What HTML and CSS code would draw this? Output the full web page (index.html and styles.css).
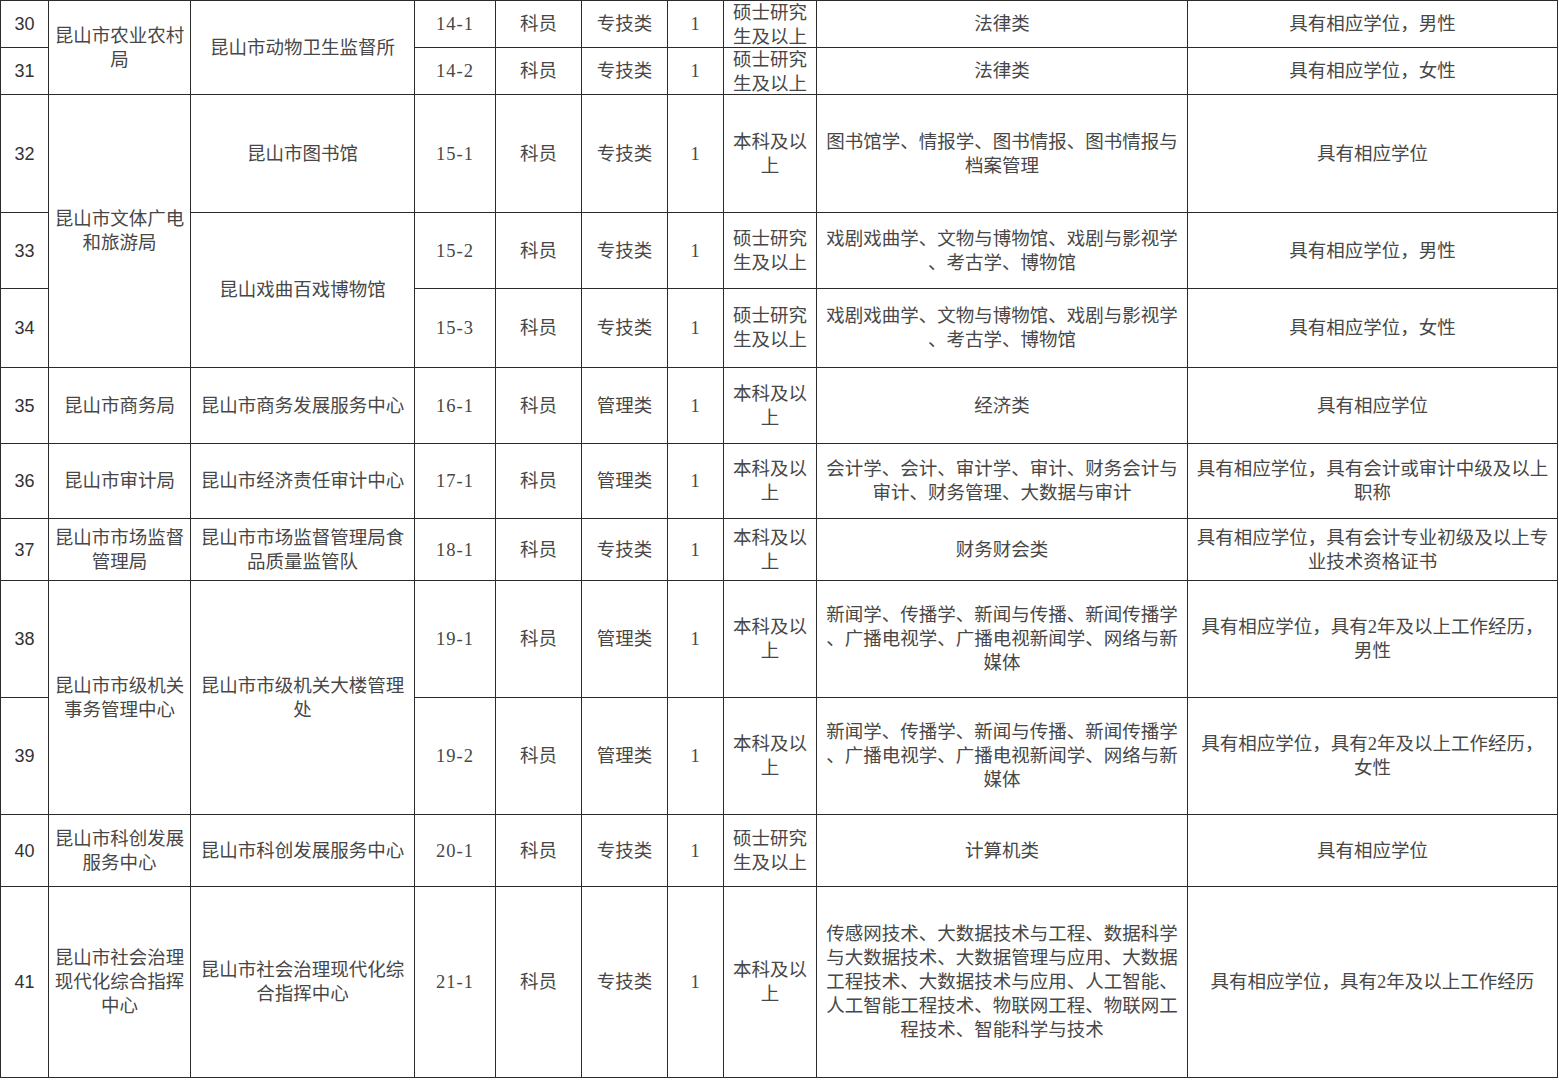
FILE: index.html
```html
<!DOCTYPE html>
<html lang="zh-CN">
<head>
<meta charset="utf-8">
<title>岗位表</title>
<link rel="stylesheet" href="styles.css">
</head>
<body>
<table class="jobs">
  <colgroup>
    <col class="c-no"><col class="c-dept"><col class="c-unit"><col class="c-code"><col class="c-post"><col class="c-type"><col class="c-num"><col class="c-edu"><col class="c-major"><col class="c-other">
  </colgroup>
  <tbody>
    <tr class="h47">
      <td class="no">30</td>
      <td rowspan="2">昆山市农业农村<br>局</td>
      <td rowspan="2">昆山市动物卫生监督所</td>
      <td class="code">14-1</td><td>科员</td><td>专技类</td><td class="code">1</td>
      <td><div class="tight">硕士研究<br>生及以上</div></td>
      <td>法律类</td>
      <td>具有相应学位，男性</td>
    </tr>
    <tr class="h47">
      <td class="no">31</td>
      <td class="code">14-2</td><td>科员</td><td>专技类</td><td class="code">1</td>
      <td><div class="tight">硕士研究<br>生及以上</div></td>
      <td>法律类</td>
      <td>具有相应学位，女性</td>
    </tr>
    <tr class="h118">
      <td class="no">32</td>
      <td rowspan="3">昆山市文体广电<br>和旅游局</td>
      <td>昆山市图书馆</td>
      <td class="code">15-1</td><td>科员</td><td>专技类</td><td class="code">1</td>
      <td>本科及以<br>上</td>
      <td>图书馆学、情报学、图书情报、图书情报与<br>档案管理</td>
      <td>具有相应学位</td>
    </tr>
    <tr class="h76">
      <td class="no">33</td>
      <td rowspan="2">昆山戏曲百戏博物馆</td>
      <td class="code">15-2</td><td>科员</td><td>专技类</td><td class="code">1</td>
      <td>硕士研究<br>生及以上</td>
      <td>戏剧戏曲学、文物与博物馆、戏剧与影视学<br>、考古学、博物馆</td>
      <td>具有相应学位，男性</td>
    </tr>
    <tr class="h79">
      <td class="no">34</td>
      <td class="code">15-3</td><td>科员</td><td>专技类</td><td class="code">1</td>
      <td>硕士研究<br>生及以上</td>
      <td>戏剧戏曲学、文物与博物馆、戏剧与影视学<br>、考古学、博物馆</td>
      <td>具有相应学位，女性</td>
    </tr>
    <tr class="h76">
      <td class="no">35</td>
      <td>昆山市商务局</td>
      <td>昆山市商务发展服务中心</td>
      <td class="code">16-1</td><td>科员</td><td>管理类</td><td class="code">1</td>
      <td>本科及以<br>上</td>
      <td>经济类</td>
      <td>具有相应学位</td>
    </tr>
    <tr class="h75">
      <td class="no">36</td>
      <td>昆山市审计局</td>
      <td>昆山市经济责任审计中心</td>
      <td class="code">17-1</td><td>科员</td><td>管理类</td><td class="code">1</td>
      <td>本科及以<br>上</td>
      <td>会计学、会计、审计学、审计、财务会计与<br>审计、财务管理、大数据与审计</td>
      <td>具有相应学位，具有会计或审计中级及以上<br>职称</td>
    </tr>
    <tr class="h62">
      <td class="no">37</td>
      <td>昆山市市场监督<br>管理局</td>
      <td>昆山市市场监督管理局食<br>品质量监管队</td>
      <td class="code">18-1</td><td>科员</td><td>专技类</td><td class="code">1</td>
      <td>本科及以<br>上</td>
      <td>财务财会类</td>
      <td>具有相应学位，具有会计专业初级及以上专<br>业技术资格证书</td>
    </tr>
    <tr class="h117">
      <td class="no">38</td>
      <td rowspan="2">昆山市市级机关<br>事务管理中心</td>
      <td rowspan="2">昆山市市级机关大楼管理<br>处</td>
      <td class="code">19-1</td><td>科员</td><td>管理类</td><td class="code">1</td>
      <td>本科及以<br>上</td>
      <td>新闻学、传播学、新闻与传播、新闻传播学<br>、广播电视学、广播电视新闻学、网络与新<br>媒体</td>
      <td>具有相应学位，具有2年及以上工作经历，<br>男性</td>
    </tr>
    <tr class="h117">
      <td class="no">39</td>
      <td class="code">19-2</td><td>科员</td><td>管理类</td><td class="code">1</td>
      <td>本科及以<br>上</td>
      <td>新闻学、传播学、新闻与传播、新闻传播学<br>、广播电视学、广播电视新闻学、网络与新<br>媒体</td>
      <td>具有相应学位，具有2年及以上工作经历，<br>女性</td>
    </tr>
    <tr class="h72">
      <td class="no">40</td>
      <td>昆山市科创发展<br>服务中心</td>
      <td>昆山市科创发展服务中心</td>
      <td class="code">20-1</td><td>科员</td><td>专技类</td><td class="code">1</td>
      <td>硕士研究<br>生及以上</td>
      <td>计算机类</td>
      <td>具有相应学位</td>
    </tr>
    <tr class="h191">
      <td class="no">41</td>
      <td>昆山市社会治理<br>现代化综合指挥<br>中心</td>
      <td>昆山市社会治理现代化综<br>合指挥中心</td>
      <td class="code">21-1</td><td>科员</td><td>专技类</td><td class="code">1</td>
      <td>本科及以<br>上</td>
      <td>传感网技术、大数据技术与工程、数据科学<br>与大数据技术、大数据管理与应用、大数据<br>工程技术、大数据技术与应用、人工智能、<br>人工智能工程技术、物联网工程、物联网工<br>程技术、智能科学与技术</td>
      <td>具有相应学位，具有2年及以上工作经历</td>
    </tr>
  </tbody>
</table>
</body>
</html>
```

FILE: styles.css
```css
html, body {
  margin: 0;
  padding: 0;
  background: #ffffff;
}

.jobs {
  border-collapse: collapse;
  table-layout: fixed;
  width: 1557px;
  font-family: "Liberation Serif", "Noto Sans CJK SC", serif;
  font-size: 18.5px;
  line-height: 24px;
  color: #474747;
  border: 1px solid #1e1e1e;
}

.jobs td {
  border: 1px solid #2b2b2b;
  padding: 0 2px;
  text-align: center;
  vertical-align: middle;
  white-space: nowrap;
  overflow: visible;
}

.jobs td.no {
  font-family: "Liberation Sans", "Noto Sans CJK SC", sans-serif;
  font-size: 18px;
  color: #333;
}

.jobs td.code {
  letter-spacing: 1px;
}

.tight {
  margin: -3px 0;
  padding-top: 2px;
}

.c-no { width: 48px; }
.c-dept { width: 142px; }
.c-unit { width: 224px; }
.c-code { width: 81px; }
.c-post { width: 86px; }
.c-type { width: 86px; }
.c-num { width: 56px; }
.c-edu { width: 93px; }
.c-major { width: 371px; }
.c-other { width: 370px; }

.h47 { height: 47px; }
.h62 { height: 62px; }
.h72 { height: 72px; }
.h75 { height: 75px; }
.h76 { height: 76px; }
.h79 { height: 79px; }
.h117 { height: 117px; }
.h118 { height: 118px; }
.h191 { height: 191px; }
```
